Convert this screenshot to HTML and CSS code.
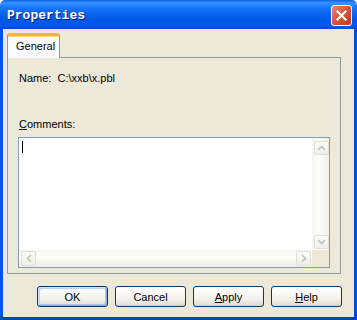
FILE: index.html
```html
<!DOCTYPE html>
<html lang="en">

<head>
    <meta charset="UTF-8">
    <title>Properties</title>
    <link rel="stylesheet" href="styles.css">
</head>

<body>
    <div class="window">
        <div class="titlebar">
            <span class="title">Properties</span>
            <span class="close">
                <svg width="13" height="13" viewBox="0 0 13 13">
                    <path d="M2.5 2.5 L10.5 10.5 M10.5 2.5 L2.5 10.5" stroke="#fff" stroke-width="2.2" stroke-linecap="square" fill="none" />
                </svg>
            </span>
        </div>

        <div class="frame">
            <div class="tabs">
                <div class="tab active">General</div>
            </div>

            <div class="panel">
                <div class="field">Name:&nbsp; C:\xxb\x.pbl</div>
                <div class="label"><u>C</u>omments:</div>

                <div class="memo">
                    <div class="memo-text"><span class="caret"></span></div>
                    <div class="vscroll">
                        <span class="arrow">
                            <svg width="9" height="6" viewBox="0 0 9 6"><path d="M1 5 L4.5 1.5 L8 5" stroke="#c3c2b8" stroke-width="1.6" fill="none" /></svg>
                        </span>
                        <span class="arrow">
                            <svg width="9" height="6" viewBox="0 0 9 6"><path d="M1 1 L4.5 4.5 L8 1" stroke="#c3c2b8" stroke-width="1.6" fill="none" /></svg>
                        </span>
                    </div>
                    <div class="hscroll">
                        <span class="arrow">
                            <svg width="6" height="9" viewBox="0 0 6 9"><path d="M5 1 L1.5 4.5 L5 8" stroke="#c3c2b8" stroke-width="1.6" fill="none" /></svg>
                        </span>
                        <span class="arrow">
                            <svg width="6" height="9" viewBox="0 0 6 9"><path d="M1 1 L4.5 4.5 L1 8" stroke="#c3c2b8" stroke-width="1.6" fill="none" /></svg>
                        </span>
                    </div>
                    <div class="corner"></div>
                </div>
            </div>

            <div class="buttons">
                <button class="btn default">OK</button>
                <button class="btn">Cancel</button>
                <button class="btn"><u>A</u>pply</button>
                <button class="btn"><u>H</u>elp</button>
            </div>
        </div>
    </div>
</body>

</html>
```

FILE: styles.css
```css
* {
    margin: 0px;
    padding: 0px;
    box-sizing: border-box;
}

body {
    font-family: "Liberation Sans", Arial, sans-serif;
    font-size: 11px;
    background: #fff;
}

.window {
    width: 357px;
    height: 320px;
    display: flex;
    flex-direction: column;
}

.titlebar {
    height: 29px;
    padding: 2px 5px 0 7px;
    display: flex;
    align-items: center;
    justify-content: space-between;
    border-radius: 5px 5px 0 0;
    background: linear-gradient(to bottom, #0a5fe6 0%, #3c93ff 10%, #1a7cfd 22%, #0a66f2 45%, #0257e6 70%, #0359ec 88%, #0047d3 100%);
}

.titlebar .title {
    font-family: "Liberation Mono", "Courier New", monospace;
    font-weight: bold;
    font-size: 13px;
    color: #fff;
    text-shadow: 1px 1px #0a1883;
}

.titlebar .close {
    width: 21px;
    height: 21px;
    display: flex;
    align-items: center;
    justify-content: center;
    border: 1px solid #fff;
    border-radius: 3px;
    background: linear-gradient(135deg, #e88a6e 0%, #d9573a 45%, #c23a1f 100%);
}

.frame {
    flex: 1;
    display: flex;
    flex-direction: column;
    padding: 4px 13px 0 4px;
    background: #ece9d8;
    border-left: 3px solid #0055e5;
    border-right: 3px solid #0049da;
    border-bottom: 3px solid #0042cc;
}

.tabs {
    display: flex;
    position: relative;
    z-index: 1;
    margin-bottom: -1px;
}

.tab {
    width: 53px;
    height: 25px;
    padding: 4px 0 0 8px;
    color: #000;
    background: #fcfcfe;
    border: 1px solid #919b9c;
    border-bottom: none;
    border-top: 3px solid #f5b53c;
    border-radius: 3px 3px 0 0;
    box-shadow: inset 0 1px #ffd37a;
}

.panel {
    height: 217px;
    padding: 14px 10px 0 10px;
    border: 1px solid #919b9c;
    background: #ece9d8;
}

.field,
.label {
    height: 13px;
    line-height: 13px;
    padding-left: 1px;
    color: #000;
}

.label {
    margin-top: 33px;
}

.memo {
    margin-top: 6px;
    height: 131px;
    border: 1px solid #7f9db9;
    background: #fff;
    display: grid;
    grid-template-columns: 1fr 17px;
    grid-template-rows: 1fr 17px;
}

.memo-text {
    padding: 3px 0 0 3px;
}

.memo-text .caret {
    display: block;
    width: 1px;
    height: 12px;
    background: #000;
}

.vscroll {
    display: flex;
    flex-direction: column;
    justify-content: space-between;
    padding: 3px 1px 1px 2px;
    background: linear-gradient(to right, #f5f4ef, #fefefb 40%, #f0efe8);
}

.hscroll {
    display: flex;
    justify-content: space-between;
    padding: 1px 1px 1px 2px;
    background: linear-gradient(to bottom, #f5f4ef, #fefefb 40%, #eeede6);
}

.arrow {
    width: 15px;
    height: 15px;
    display: flex;
    align-items: center;
    justify-content: center;
    border: 1px solid #e2e0d6;
    border-radius: 2px;
    background: linear-gradient(to bottom, #fbfbf8, #efeee8);
}

.vscroll .arrow {
    height: 14px;
}

.corner {
    background: #ece9d8;
}

.buttons {
    margin-top: 12px;
    margin-right: -1px;
    display: flex;
    justify-content: flex-end;
    gap: 7px;
}

.btn {
    width: 71px;
    height: 21px;
    font-family: "Liberation Sans", Arial, sans-serif;
    font-size: 11px;
    color: #000;
    border: 1px solid #003c74;
    border-radius: 3px;
    background: linear-gradient(to bottom, #ffffff 0%, #f4f3ee 60%, #e3e1d8 90%, #d6d0c5 100%);
}

.btn.default {
    box-shadow: inset 1px 1px #cee7ff, inset -1px -1px #8aa9e6, inset 2px 2px #bcd4f6, inset -2px -2px #a9c4f2;
}
```
